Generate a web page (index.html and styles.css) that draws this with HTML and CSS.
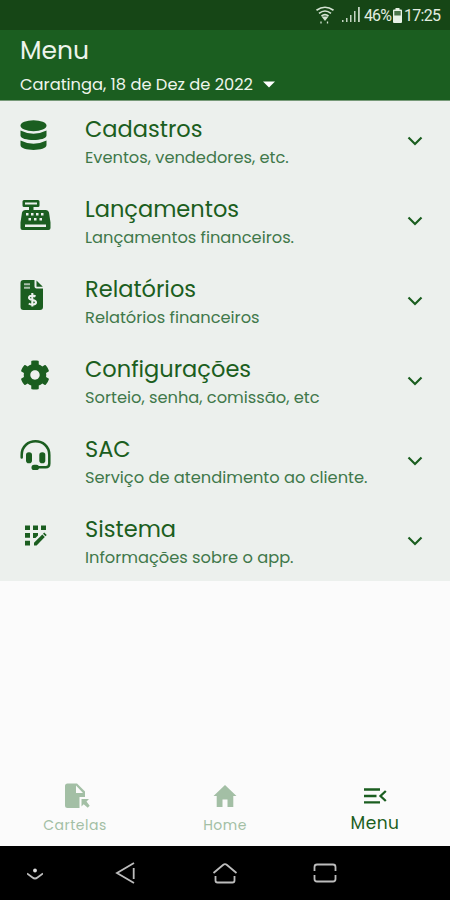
FILE: index.html
```html
<!DOCTYPE html>
<html lang="pt-BR">
<head>
  <meta charset="UTF-8">
  <meta name="viewport" content="width=device-width, initial-scale=1.0">
  <title>Menu</title>
  <link rel="stylesheet" href="styles.css">
</head>
<body>
  <div class="status-bar">
    <svg class="wifi" width="20" height="20" viewBox="0 0 20 20" fill="none" stroke="#d5e3d3" stroke-width="1.7">
      <path d="M1.500 5.300Q10-.8 18.500 5.300M4 8.300Q10 3.700 16 8.300M6.500 11Q10 8.300 13.500 11"/>
      <path d="M6.500 11.500h7L10 16z" fill="#d5e3d3" stroke="none"/>
      <path d="M6 16.500v2M12.500 16.500v2" stroke-width="1.300"/>
    </svg>
    <svg class="signal" width="19" height="16" viewBox="0 0 19 16" fill="#c3d4c1">
      <path d="M0 13h1.500v2H0zM4 11h1.500v4H4zM8 8h1.500v7H8zM12 4h1.500v11H12zM16 0h1.800v15H16z"/>
    </svg>
    <span class="percent">46%</span>
    <svg class="battery" width="9" height="15" viewBox="0 0 9 15">
      <path d="M2.500 0h4v1.500H8q1 0 1 1V14q0 1-1 1H1q-1 0-1-1V2.500q0-1 1-1h1.500z" fill="#e8f2e6"/>
      <path d="M1.300 3h6.400v4.500H1.300z" fill="#4b7549"/>
    </svg>
    <span class="clock">17:25</span>
  </div>

  <header>
    <h1>Menu</h1>
    <div class="event">
      <span>Caratinga, 18 de Dez de 2022</span>
      <svg width="12" height="7" viewBox="0 0 12 7"><path d="M0 .5h12L6 6.500z" fill="#fff"/></svg>
    </div>
  </header>

  <main>
    <div class="item">
      <svg class="icon" viewBox="0 0 30 30" fill="currentColor">
        <ellipse cx="13.500" cy="5.700" rx="13" ry="5.500"/>
        <path d="M.5 10.500q13 6.500 26 0v5c0 6-26 6-26 0z"/>
        <path d="M.5 20.500q13 6.500 26 0v4.500c0 6.500-26 6.500-26 0z"/>
      </svg>
      <div class="text">
        <h2>Cadastros</h2>
        <p>Eventos, vendedores, etc.</p>
      </div>
      <svg class="chevron" viewBox="0 0 16 10"><path d="M1.500 1.500L8 8l6.500-6.500"/></svg>
    </div>
    <div class="item">
      <svg class="icon" viewBox="0 0 30 30" fill="currentColor">
        <path fill-rule="evenodd" d="M4 0h14q1.500 0 1.500 1.500v4Q19.500 7 18 7h-4.500v3H26q2.500 0 3 2.500l1.500 10V28q0 2-2 2H2.500q-2 0-2-2v-5.500L2 12.500Q2.500 10 5 10h4V7H4Q2.500 7 2.500 5.500v-4Q2.500 0 4 0zM5 2.500v2h12v-2zM5 24.500V27h21v-2.500z"/>
        <path fill="#ecf0ed" d="M6 13h2.500v2.500H6zM11 13h2.500v2.500H11zM16 13h2.500v2.500H16zM21 13h2.500v2.500H21zM8.500 18H11v2.500H8.500zM14 18h2.500v2.500H14zM19.500 18H22v2.500h-2.500z"/>
      </svg>
      <div class="text">
        <h2>Lançamentos</h2>
        <p>Lançamentos financeiros.</p>
      </div>
      <svg class="chevron" viewBox="0 0 16 10"><path d="M1.500 1.500L8 8l6.500-6.500"/></svg>
    </div>
    <div class="item">
      <svg class="icon" viewBox="0 0 30 30" fill="currentColor">
        <path d="M3.500 0H14.500v6.500q0 2 2 2H23V27q0 3-3 3H3.500q-3 0-3-3V3q0-3 3-3z"/>
        <path d="M16.500 0.500l6.300 6.300h-6.300z"/>
        <path fill="none" stroke="#a9c0aa" stroke-width="2" d="M4 4.200h6M4 7.800h6"/>
        <path fill="none" stroke="#ecf0ed" stroke-width="2.100" d="M15.500 16.500c-2-1.300-6.500-1.200-6.500 1.300 0 3 7 1.600 7 4.500 0 2.700-5 2.700-7.200 1.200M12.300 13v13.500"/>
      </svg>
      <div class="text">
        <h2>Relatórios</h2>
        <p>Relatórios financeiros</p>
      </div>
      <svg class="chevron" viewBox="0 0 16 10"><path d="M1.500 1.500L8 8l6.500-6.500"/></svg>
    </div>
    <div class="item">
      <svg class="icon" viewBox="0 0 512 512" fill="currentColor">
        <path d="M487.400 315.700l-42.600-24.600c4.300-23.200 4.300-47 0-70.200l42.600-24.600c4.900-2.800 7.100-8.600 5.500-14-11.100-35.600-30-67.800-54.700-94.600-3.800-4.100-10-5.100-14.800-2.300L380.800 110c-17.900-15.400-38.500-27.300-60.800-35.100V25.800c0-5.600-3.900-10.500-9.400-11.700-36.700-8.200-74.300-7.800-109.200 0-5.500 1.200-9.400 6.100-9.400 11.700V75c-22.200 7.900-42.800 19.800-60.800 35.100L88.700 85.500c-4.900-2.800-11-1.900-14.800 2.300-24.700 26.700-43.600 58.900-54.700 94.600-1.700 5.400.6 11.200 5.500 14L67.300 221c-4.300 23.200-4.300 47 0 70.200l-42.600 24.600c-4.900 2.800-7.100 8.600-5.500 14 11.100 35.600 30 67.800 54.700 94.600 3.800 4.100 10 5.100 14.800 2.300l42.600-24.600c17.900 15.400 38.500 27.300 60.800 35.100v49.200c0 5.600 3.900 10.500 9.400 11.700 36.700 8.200 74.300 7.800 109.200 0 5.500-1.200 9.400-6.100 9.400-11.700v-49.200c22.200-7.900 42.800-19.800 60.800-35.100l42.600 24.600c4.900 2.800 11 1.900 14.800-2.300 24.700-26.700 43.600-58.900 54.700-94.600 1.500-5.500-.7-11.300-5.600-14.100zM256 336c-44.100 0-80-35.900-80-80s35.900-80 80-80 80 35.900 80 80-35.900 80-80 80z"/>
      </svg>
      <div class="text">
        <h2>Configurações</h2>
        <p>Sorteio, senha, comissão, etc</p>
      </div>
      <svg class="chevron" viewBox="0 0 16 10"><path d="M1.500 1.500L8 8l6.500-6.500"/></svg>
    </div>
    <div class="item">
      <svg class="icon" viewBox="0 0 30 30" fill="currentColor">
        <path fill="none" stroke="currentColor" stroke-width="2.500" stroke-linecap="round" d="M1.700 17.500V15c0-18.300 27.600-18.300 27.600 0v8.500q0 3.800-3.500 3.800H17"/>
        <rect x="6" y="12.200" width="6" height="11" rx="2.800"/>
        <rect x="19.300" y="12.200" width="6" height="11" rx="2.800"/>
        <rect x="11.500" y="24.700" width="7.500" height="5.300" rx="2.600"/>
      </svg>
      <div class="text">
        <h2>SAC</h2>
        <p>Serviço de atendimento ao cliente.</p>
      </div>
      <svg class="chevron" viewBox="0 0 16 10"><path d="M1.500 1.500L8 8l6.500-6.500"/></svg>
    </div>
    <div class="item">
      <svg class="icon" viewBox="0 0 30 30" fill="currentColor">
        <path d="M5 5.500h5v4.500H5zM13 5.500h5v4.500h-5zM21 5.500h5v4.500h-5zM5 13h5v4.800H5zM5 20.800h5v4.800H5zM13 13h5v2.500L15.500 18H13zM14 22.700l8.300-8.200 2.500 2.500-8.200 8.600H14zM23 13.700l1.200-1.200 2.500 2.500-1.200 1.200z"/>
      </svg>
      <div class="text">
        <h2>Sistema</h2>
        <p>Informações sobre o app.</p>
      </div>
      <svg class="chevron" viewBox="0 0 16 10"><path d="M1.500 1.500L8 8l6.500-6.500"/></svg>
    </div>
  </main>

  <nav class="tabs">
    <div class="tab">
      <svg width="30" height="28" viewBox="0 0 30 28" fill="currentColor">
        <path fill-rule="evenodd" d="M7.500 1.500H17l8 8V15h-5.500v11h-12Q5 26 5 23.500V4q0-2.500 2.500-2.500zM16 3.500V11h7z"/>
        <path d="M21.500 17h7.500l-2.500 2.600 3.200 4.200-2 2-4-3.500-2.200 2.200z"/>
      </svg>
      <span>Cartelas</span>
    </div>
    <div class="tab">
      <svg width="30" height="28" viewBox="0 0 30 28" fill="currentColor">
        <path d="M15 3L3.500 14h3.200v11h5.800v-7.500h5V25h5.800V14h3.200z"/>
      </svg>
      <span>Home</span>
    </div>
    <div class="tab active">
      <svg width="30" height="28" viewBox="0 0 30 28" fill="none" stroke="currentColor" stroke-width="2.300">
        <path d="M4 7.500h16M4 14h12.500M4 20.300h16M25.800 9L20.500 14l5.300 5"/>
      </svg>
      <span>Menu</span>
    </div>
  </nav>

  <div class="system-bar">
    <svg class="hide" viewBox="0 0 16 26"><circle cx="8" cy="10.500" r="1.900" fill="#ddd" stroke="none"/><path d="M0 13.500l5.500 4q2.500 2 5 0l5.500-4"/></svg>
    <svg viewBox="0 0 26 26"><path d="M22 3L5 13l17 10M21.700 8v11"/></svg>
    <svg viewBox="0 0 26 26"><path d="M1.500 13L11 5q2-1.700 4 0l9.500 8M3.500 16v4.500q0 2 2 2h15q2 0 2-2V16"/></svg>
    <svg viewBox="0 0 26 26"><path d="M2.500 11V7q0-2.500 2.500-2.500h16q2.500 0 2.500 2.500v4M2.500 15v4q0 2.500 2.500 2.500h16q2.500 0 2.500-2.500v-4"/></svg>
  </div>
</body>
</html>
```
FILE: styles.css
```css
* {
  box-sizing: border-box;
}
body {
  display: flex;
  flex-direction: column;
  height: 100vh;
  margin: 0;
  overflow: hidden;
  background: #fbfbfb;
  color: #1b5e20;
  font-family: Poppins, Inter, sans-serif;
}
h1, h2, p {
  margin: 0;
}
svg {
  display: block;
  flex-shrink: 0;
}
.status-bar {
  display: flex;
  align-items: center;
  justify-content: flex-end;
  height: 30px;
  padding-right: 9px;
  background: #164616;
  color: #e3ede1;
  font-family: Roboto, sans-serif;
  font-size: 16px;
}
.wifi {
  margin-right: 7px;
}
.signal {
  margin-right: 3px;
}
.percent {
  width: 29px;
  letter-spacing: -0.9px;
}
.battery {
  margin-right: 2px;
}
.clock {
  width: 37px;
  letter-spacing: -0.7px;
}
header {
  height: 70px;
  padding: 4px 20px 0;
  background: #1b5e20;
  color: #eef5ec;
}
h1 {
  font-size: 25px;
  font-weight: 400;
  line-height: 34px;
}
.event {
  display: flex;
  align-items: center;
  gap: 10px;
  font-size: 16.3px;
  line-height: 33px;
}
main {
  height: 481px;
  border-top: 1px solid #769a78;
  background: #ecf0ed;
}
.item {
  display: flex;
  height: 80px;
  padding: 19px 27px 0 20px;
}
.icon {
  width: 30px;
  height: 30px;
  overflow: visible;
}
.text {
  flex: 1;
  margin: -6px 0 0 35px;
  white-space: nowrap;
}
h2 {
  font-size: 22.5px;
  font-weight: 400;
  line-height: 30px;
}
p {
  font-size: 16.25px;
  font-weight: 400;
  line-height: 27px;
  color: #40784a;
}
.chevron {
  width: 16px;
  height: 10px;
  margin-top: 16px;
  fill: none;
  stroke: #1b5e20;
  stroke-width: 2.2;
}
.tabs {
  display: flex;
  height: 76px;
  margin-top: auto;
}
.tab {
  flex: 1;
  display: flex;
  flex-direction: column;
  align-items: center;
  padding-top: 12px;
  color: #a3bfa5;
  font-size: 14px;
}
.tab span {
  line-height: 31px;
  letter-spacing: 0.5px;
}
.tab.active {
  color: #1b5e20;
  font-size: 17px;
}
.tab.active span {
  line-height: 27px;
}
.system-bar {
  display: flex;
  gap: 74px;
  height: 54px;
  padding: 14px 27px;
  background: #000;
}
.system-bar svg {
  width: 26px;
  height: 26px;
  fill: none;
  stroke: #bdbdbd;
  stroke-width: 1.8;
}
.system-bar .hide {
  width: 16px;
  margin-right: -5px;
}
```
